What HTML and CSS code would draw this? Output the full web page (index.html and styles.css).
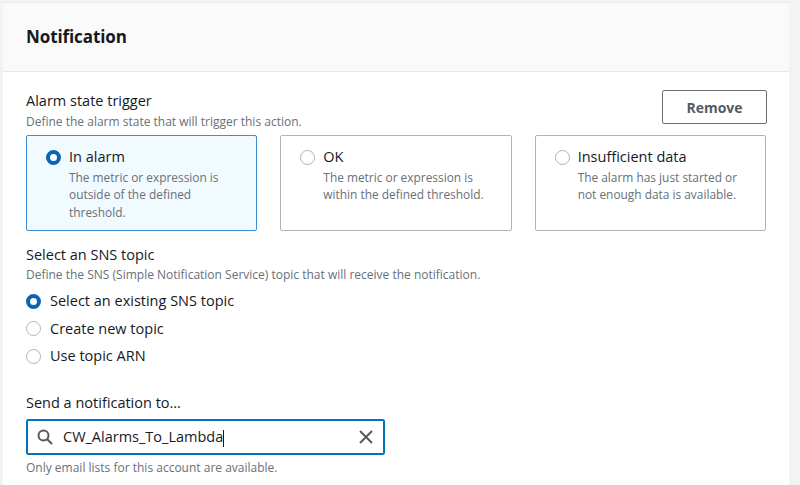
FILE: index.html
```html
<!DOCTYPE html>
<html>
<head>
<meta charset="utf-8">
<link rel="stylesheet" href="styles.css">
</head>
<body>
<div class="panel">
  <div class="panel-header"><h2 class="title">Notification</h2></div>
  <div class="panel-body">
    <div class="trigger-head">
      <div>
        <div class="label">Alarm state trigger</div>
        <div class="desc first">Define the alarm state that will trigger this action.</div>
      </div>
      <button class="btn">Remove</button>
    </div>
    <div class="cards">
      <div class="card selected">
        <span class="radio on"></span>
        <div>
          <div class="card-title">In alarm</div>
          <div class="card-desc">The metric or expression is outside of the defined threshold.</div>
        </div>
      </div>
      <div class="card">
        <span class="radio"></span>
        <div>
          <div class="card-title">OK</div>
          <div class="card-desc">The metric or expression is within the defined threshold.</div>
        </div>
      </div>
      <div class="card">
        <span class="radio"></span>
        <div>
          <div class="card-title">Insufficient data</div>
          <div class="card-desc">The alarm has just started or not enough data is available.</div>
        </div>
      </div>
    </div>

    <div class="section">
      <div class="label">Select an SNS topic</div>
      <div class="desc">Define the SNS (Simple Notification Service) topic that will receive the notification.</div>
      <div class="options">
        <div class="option"><span class="radio on"></span><span>Select an existing SNS topic</span></div>
        <div class="option"><span class="radio"></span><span>Create new topic</span></div>
        <div class="option"><span class="radio"></span><span>Use topic ARN</span></div>
      </div>
    </div>

    <div class="section send">
      <div class="label">Send a notification to…</div>
      <div class="input">
        <svg class="search" width="16" height="16" viewBox="0 0 16 16"><circle cx="6.5" cy="6.5" r="5" fill="none" stroke="#545b64" stroke-width="2"/><line x1="10.2" y1="10.2" x2="14.5" y2="14.5" stroke="#545b64" stroke-width="2" stroke-linecap="round"/></svg>
        <span class="value">CW_Alarms_To_Lambda<span class="caret"></span></span>
        <svg class="clear" width="16" height="16" viewBox="0 0 16 16"><path d="M2 2 L14 14 M14 2 L2 14" stroke="#545b64" stroke-width="2" fill="none"/></svg>
      </div>
      <div class="hint">Only email lists for this account are available.</div>
    </div>
  </div>
</div>
</body>
</html>
```
FILE: styles.css
```css
html, body {
  margin: 0;
  padding: 0;
  background: #f2f3f3;
  font-family: "Open Sans", "Noto Sans", sans-serif;
  color: #16191f;
}
body {
  padding: 2px 11px 0 3px;
  height: 483px;
  overflow: hidden;
}
.panel {
  background: #fff;
  border-top: 1px solid #e8eaea;
  height: 100%;
}
.panel-header {
  background: #fafafa;
  border-bottom: 1px solid #e6e8e8;
  height: 66px;
  display: flex;
  align-items: center;
  padding: 0 0 2px 23px;
}
.title {
  margin: 0;
  font-size: 17px;
  font-weight: 700;
  letter-spacing: -0.1px;
}
.panel-body {
  padding: 19px 23px 0 23px;
}
.trigger-head {
  display: flex;
  justify-content: space-between;
  align-items: flex-start;
}
.label {
  font-size: 14.5px;
  line-height: 20px;
}
.desc {
  font-size: 12px;
  line-height: 16px;
  color: #687078;
  margin-top: 2px;
}
.desc.first {
  margin-top: 3px;
}
.btn {
  margin-top: -1px;
  margin-right: -1px;
  width: 105px;
  height: 34px;
  border: 1px solid #687078;
  border-radius: 2px;
  background: #fff;
  color: #545b64;
  font-family: inherit;
  font-weight: 700;
  font-size: 14px;
}
.cards {
  display: grid;
  grid-template-columns: 1fr 1fr 1fr;
  gap: 23px;
  margin-top: 5px;
}
.card {
  height: 96px;
  box-sizing: border-box;
  border: 1px solid #aab7b8;
  border-radius: 2px;
  display: flex;
  gap: 8px;
  padding: 11px 22px 0 19px;
}
.card.selected {
  background: #f1faff;
  border-color: #3d8fd1;
}
.radio {
  flex: none;
  box-sizing: border-box;
  width: 15px;
  height: 15px;
  border-radius: 50%;
  border: 1.5px solid #aab7b8;
  background: #fff;
  margin-top: 2.5px;
}
.radio.on {
  border: 4px solid #0a64b6;
}
.card-title {
  font-size: 14.5px;
  line-height: 20px;
}
.card-desc {
  font-size: 11.9px;
  line-height: 17.5px;
  color: #687078;
  margin-top: 1.5px;
}
.section {
  margin-top: 14px;
}
.options {
  display: flex;
  flex-direction: column;
  gap: 7.5px;
  margin-top: 8px;
}
.option {
  display: flex;
  align-items: center;
  gap: 9px;
  font-size: 14.5px;
  line-height: 20px;
}
.option .radio {
  margin-top: 0;
}
.send {
  margin-top: 27px;
}
.input {
  margin-top: 6px;
  width: 359px;
  height: 36px;
  box-sizing: border-box;
  border: 1px solid #0073bb;
  box-shadow: inset 0 0 0 1px #0073bb;
  border-radius: 2px;
  display: flex;
  align-items: center;
  padding: 0 10px 0 10px;
  gap: 10px;
  font-size: 14.5px;
}
.value {
  flex: 1;
}
.caret {
  display: inline-block;
  width: 1px;
  height: 17px;
  background: #16191f;
  vertical-align: middle;
}
.hint {
  font-size: 12px;
  line-height: 16px;
  color: #687078;
  margin-top: 5px;
}
```
